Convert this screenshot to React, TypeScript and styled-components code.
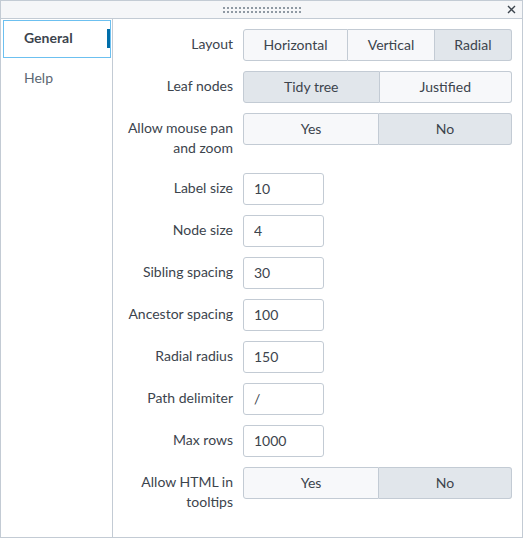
import { useState } from 'react'
import styled, { createGlobalStyle } from 'styled-components'

const Colors = {
  text: '#3c444d',
  muted: '#5c6773',
  border: '#c3cbd4',
  header: '#f5f6f8',
  segment: '#f7f8fa',
  selected: '#e1e6eb',
  focus: '#6cc0f0',
  accent: '#006eaa',
  grip: '#8f99a3',
}

const GlobalStyle = createGlobalStyle`
  body {
    margin: 0;
    font-family: Lato, 'Liberation Sans', sans-serif;
    color: ${Colors.text};
  }
  * {
    box-sizing: border-box;
  }
`

const Panel = styled.div`
  width: 523px;
  height: 538px;
  border: 1px solid ${Colors.border};
  display: flex;
  flex-direction: column;
  background: white;
`
const Header = styled.div`
  position: relative;
  height: 18px;
  flex: none;
  background: ${Colors.header};
  border-bottom: 1px solid ${Colors.border};
  display: flex;
  align-items: center;
  justify-content: center;
`
const CloseButton = styled.button`
  position: absolute;
  right: 5px;
  top: 3px;
  width: 11px;
  height: 11px;
  padding: 0;
  border: none;
  background: transparent;
  display: flex;
  align-items: center;
  justify-content: center;
`
const Body = styled.div`
  flex: 1;
  display: flex;
  min-height: 0;
`
const Sidebar = styled.div`
  width: 112px;
  flex: none;
  border-right: 1px solid ${Colors.border};
  padding: 1px 1px 0 2px;
  display: flex;
  flex-direction: column;
  gap: 2px;
`
const Tab = styled.button<{ selected: boolean }>`
  position: relative;
  height: 38px;
  width: 108px;
  padding: 0 0 3px 20px;
  text-align: left;
  font-family: inherit;
  font-size: 14px;
  font-weight: ${({ selected }) => (selected ? 700 : 400)};
  color: ${({ selected }) => (selected ? Colors.text : Colors.muted)};
  background: white;
  border: 1px solid ${({ selected }) => (selected ? Colors.focus : 'transparent')};
  cursor: pointer;
`
const TabIndicator = styled.span`
  position: absolute;
  right: 0;
  top: 8px;
  width: 3px;
  height: 19px;
  background: ${Colors.accent};
`
const Content = styled.div`
  flex: 1;
  padding: 10px 10px 0 10px;
  display: flex;
  flex-direction: column;
  gap: 10px;
`
const Row = styled.div`
  display: flex;
  align-items: flex-start;
`
const Label = styled.label`
  width: 110px;
  flex: none;
  margin-right: 10px;
  padding: 5px 0;
  text-align: right;
  font-size: 14px;
  line-height: 20px;
  color: ${Colors.text};
`
const SegmentGroup = styled.div`
  flex: 1;
  display: flex;
  height: 32px;
`
const Segment = styled.button<{ selected: boolean }>`
  flex: 1 1 auto;
  padding: 0 16px 2px;
  font-family: inherit;
  font-size: 14px;
  color: ${Colors.text};
  background: ${({ selected }) => (selected ? Colors.selected : Colors.segment)};
  border: 1px solid ${Colors.border};
  border-left-width: 0;
  cursor: pointer;

  &:first-child {
    border-left-width: 1px;
    border-radius: 3px 0 0 3px;
  }
  &:last-child {
    border-radius: 0 3px 3px 0;
  }
`
const TextInput = styled.input`
  width: 81px;
  height: 32px;
  padding: 0 10px 1px;
  font-family: inherit;
  font-size: 14px;
  color: ${Colors.text};
  background: white;
  border: 1px solid ${Colors.border};
  border-radius: 3px;
  outline: none;
`

const Grip = () => (
  <svg width='78' height='6' viewBox='0 0 78 6'>
    {Array.from({ length: 20 }, (_, i) => (
      <g key={i} fill={Colors.grip}>
        <rect x={i * 4} y={0} width='2' height='2' />
        <rect x={i * 4} y={4} width='2' height='2' />
      </g>
    ))}
  </svg>
)

type ChoiceProps = {
  label: string
  options: string[]
  value: string
  onChange: (v: string) => void
}

const ChoiceRow = ({ label, options, value, onChange }: ChoiceProps) => (
  <Row>
    <Label>{label}</Label>
    <SegmentGroup>
      {options.map(o => (
        <Segment key={o} selected={o === value} onClick={() => onChange(o)}>
          {o}
        </Segment>
      ))}
    </SegmentGroup>
  </Row>
)

const InputRow = ({ label, initial }: { label: string; initial: string }) => {
  const [value, setValue] = useState(initial)
  return (
    <Row>
      <Label>{label}</Label>
      <TextInput value={value} onChange={e => setValue(e.target.value)} />
    </Row>
  )
}

const App = () => {
  const [tab, setTab] = useState('General')
  const [layout, setLayout] = useState('Radial')
  const [leaf, setLeaf] = useState('Tidy tree')
  const [pan, setPan] = useState('No')
  const [html, setHtml] = useState('No')

  return (
    <>
      <GlobalStyle />
      <Panel>
        <Header>
          <Grip />
          <CloseButton aria-label='Close'>
            <svg width='9' height='9' viewBox='0 0 9 9'>
              <path d='M1 1L8 8M8 1L1 8' stroke={Colors.text} strokeWidth='1.4' />
            </svg>
          </CloseButton>
        </Header>
        <Body>
          <Sidebar>
            {['General', 'Help'].map(t => (
              <Tab key={t} selected={tab === t} onClick={() => setTab(t)}>
                {t}
                {tab === t && <TabIndicator />}
              </Tab>
            ))}
          </Sidebar>
          <Content>
            <ChoiceRow
              label='Layout'
              options={['Horizontal', 'Vertical', 'Radial']}
              value={layout}
              onChange={setLayout}
            />
            <ChoiceRow
              label='Leaf nodes'
              options={['Tidy tree', 'Justified']}
              value={leaf}
              onChange={setLeaf}
            />
            <ChoiceRow
              label='Allow mouse pan and zoom'
              options={['Yes', 'No']}
              value={pan}
              onChange={setPan}
            />
            <InputRow label='Label size' initial='10' />
            <InputRow label='Node size' initial='4' />
            <InputRow label='Sibling spacing' initial='30' />
            <InputRow label='Ancestor spacing' initial='100' />
            <InputRow label='Radial radius' initial='150' />
            <InputRow label='Path delimiter' initial='/' />
            <InputRow label='Max rows' initial='1000' />
            <ChoiceRow
              label='Allow HTML in tooltips'
              options={['Yes', 'No']}
              value={html}
              onChange={setHtml}
            />
          </Content>
        </Body>
      </Panel>
    </>
  )
}

export default App
